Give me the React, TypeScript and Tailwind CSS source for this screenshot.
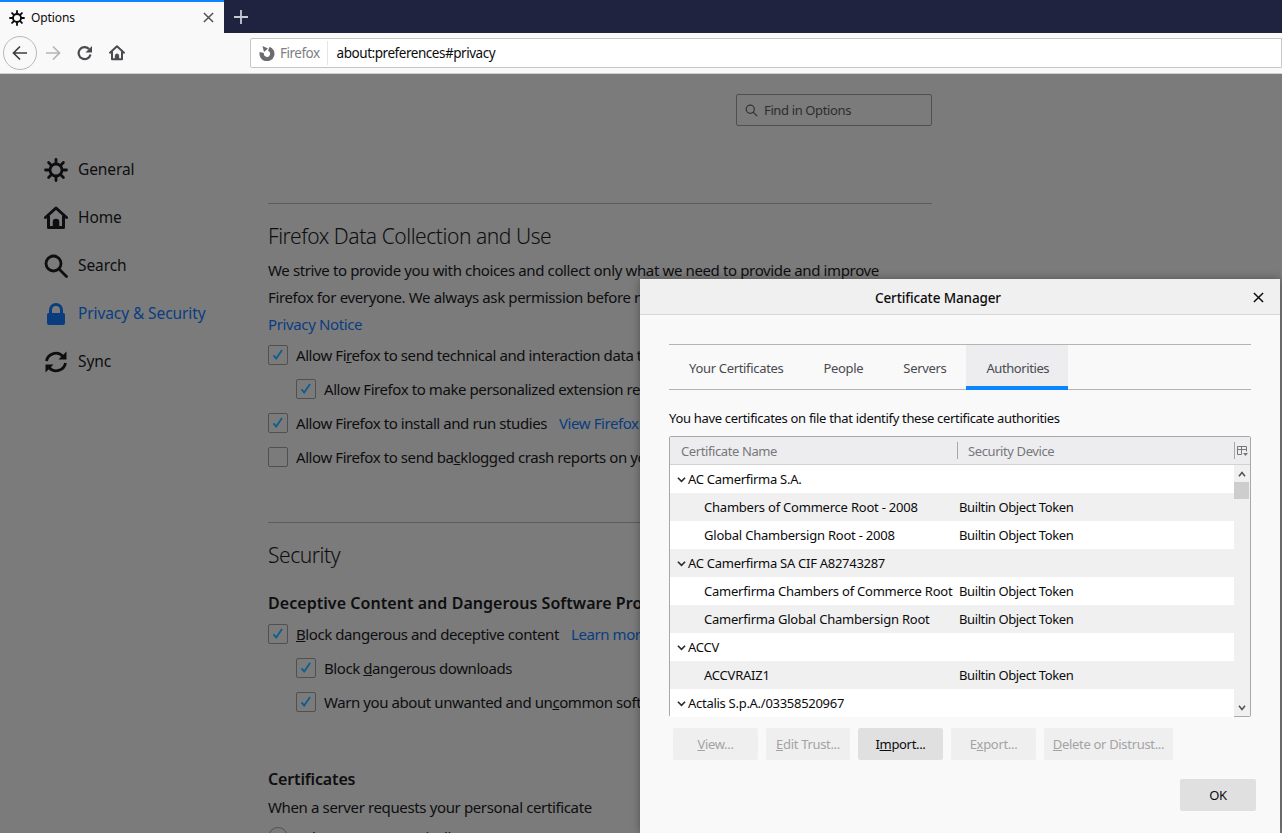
import type { ReactNode } from "react";

const font = "font-['Noto_Sans','Open_Sans',sans-serif]";

function GearIcon({ className }: { className: string }) {
  return (
    <svg viewBox="0 0 24 24" className={className} fill="none" stroke="currentColor">
      <circle cx="12" cy="12" r="6" strokeWidth="2.800" />
      <path strokeWidth="2.800" strokeLinecap="round" d="M12 1.500V5M12 19v3.500M1.500 12H5M19 12h3.500M4.600 4.600l2.400 2.400M17 17l2.400 2.400M19.400 4.600 17 7M7 17l-2.400 2.400" />
    </svg>
  );
}

function HomeIcon({ className }: { className: string }) {
  return (
    <svg viewBox="0 0 24 24" className={className} fill="none" stroke="currentColor" strokeLinejoin="round" strokeLinecap="round">
      <path strokeWidth="3" d="M1.500 11.500 12 2l10.500 9.500" />
      <path strokeWidth="3" d="M4.500 10.500v11h15v-11" />
      <path fill="currentColor" strokeWidth="1.500" d="M9.500 21v-5a2.500 2.500 0 0 1 5 0v5z" />
    </svg>
  );
}

function SearchIcon({ className }: { className: string }) {
  return (
    <svg viewBox="0 0 24 24" className={className} fill="none" stroke="currentColor" strokeWidth="2.800" strokeLinecap="round">
      <circle cx="9.500" cy="9.500" r="7.500" />
      <path d="m15 15 7.500 7.500" />
    </svg>
  );
}

function LockIcon({ className }: { className: string }) {
  return (
    <svg viewBox="0 0 24 24" className={className} fill="currentColor">
      <path d="M12 1a7 7 0 0 0-7 7v3H4.500A1.500 1.500 0 0 0 3 12.500V21a2 2 0 0 0 2 2h14a2 2 0 0 0 2-2v-8.500a1.500 1.500 0 0 0-1.500-1.500H19V8a7 7 0 0 0-7-7zm-4 10V8a4 4 0 0 1 8 0v3z" />
    </svg>
  );
}

function SyncIcon({ className }: { className: string }) {
  return (
    <svg viewBox="0 0 24 24" className={className} fill="none" stroke="currentColor" strokeWidth="2.800">
      <path d="M2.500 11A9.500 9.500 0 0 1 19 6.500" />
      <path d="M21.500 13A9.500 9.500 0 0 1 5 17.500" />
      <path fill="currentColor" stroke="none" d="M22.500 1.500v8h-8zM1.500 22.500v-8h8z" />
    </svg>
  );
}

function Check() {
  return (
    <svg viewBox="0 0 20 20" className="h-5 w-5 text-[#0a5f8f]" fill="none" stroke="currentColor" strokeWidth="2">
      <path d="m5 10.500 3 3.500 6.500-9.500" />
    </svg>
  );
}

function Checkbox({ label, checked = true, indent = false, link }: { label: ReactNode; checked?: boolean; indent?: boolean; link?: string }) {
  return (
    <div className={`flex h-[34px] items-center gap-2 overflow-hidden whitespace-nowrap tracking-[-0.42px] ${indent ? "ml-[28px] w-[344px]" : "w-[372px]"}`}>
      <span className="flex h-5 w-5 shrink-0 items-center justify-center rounded-[2px] border border-[#505050]">
        {checked && <Check />}
      </span>
      <span>{label}</span>
      {link && <span className="ml-[4px] text-[#0a3d80]">{link}</span>}
    </div>
  );
}

const navItems = [
  { label: "General", icon: GearIcon },
  { label: "Home", icon: HomeIcon },
  { label: "Search", icon: SearchIcon },
  { label: "Privacy & Security", icon: LockIcon, active: true },
  { label: "Sync", icon: SyncIcon },
];

const certRows = [
  { name: "AC Camerfirma S.A.", group: true },
  { name: "Chambers of Commerce Root - 2008" },
  { name: "Global Chambersign Root - 2008" },
  { name: "AC Camerfirma SA CIF A82743287", group: true },
  { name: "Camerfirma Chambers of Commerce Root" },
  { name: "Camerfirma Global Chambersign Root" },
  { name: "ACCV", group: true },
  { name: "ACCVRAIZ1" },
  { name: "Actalis S.p.A./03358520967", group: true },
];

function DialogButton({ children, width, enabled = false }: { children: ReactNode; width: string; enabled?: boolean }) {
  return (
    <div className={`flex h-8 items-center justify-center rounded-[2px] pt-[1px] text-[13px] ${width} ${enabled ? "bg-[#e0e0e1] text-[#0c0c0d]" : "bg-[#efeff0] text-[#a3a3a4]"}`}>
      <span>{children}</span>
    </div>
  );
}

function CertificateManager() {
  return (
    <div className="absolute bottom-0 left-[640px] top-[279px] flex w-[640px] flex-col rounded-t-[2px] bg-[#f9f9fa] text-[13px] tracking-[-0.32px] text-[#0c0c0d] shadow-[0_0_8px_rgba(0,0,0,0.35)]">
      <div className="relative flex h-[36px] shrink-0 items-center justify-center border-b border-[#d7d7d8] bg-[#f0f0f1] pr-[44px] pt-[4px]">
        <span className="text-[13.500px] font-medium tracking-[-0.12px]">Certificate Manager</span>
        <svg viewBox="0 0 12 12" className="absolute right-[16px] top-[13px] h-[11px] w-[11px]" stroke="#0c0c0d" strokeWidth="1.600">
          <path d="m1 1 10 10M11 1 1 11" />
        </svg>
      </div>

      <div className="flex flex-col px-[29px] pt-[29px]">
        <div className="flex h-[46px] w-[582px] border-y border-[#b4b4b5] text-[#4a4a4f]">
          <div className="flex items-center px-5 pt-[4px]">Your Certificates</div>
          <div className="flex items-center px-5 pt-[4px]">People</div>
          <div className="flex items-center px-5 pt-[4px]">Servers</div>
          <div className="-mb-px flex items-center border-b-[4px] border-[#0a84ff] bg-[#ededf0] pl-5 pr-[19px] pt-[6px] tracking-[-0.42px]">Authorities</div>
        </div>

        <p className="mt-[19px] h-[27px] leading-[18px]">You have certificates on file that identify these certificate authorities</p>

        <div className="flex h-[281px] w-[582px] flex-col rounded-[2px] border border-[#a8a8a9] bg-white">
          <div className="flex h-[28px] shrink-0 items-center border-b border-[#d2d2d3] bg-[#ededf0] tracking-[-0.4px] text-[#77777a]">
            <div className="flex h-[17px] w-[288px] items-center border-r border-[#a8a8a9] pl-[11px] pt-[2px]">Certificate Name</div>
            <div className="flex h-[17px] flex-1 items-center pl-[10px] pt-[2px]">Security Device</div>
            <div className="flex h-[17px] w-[16px] items-center justify-center border-l border-[#a8a8a9]">
              <svg viewBox="0 0 11 10" className="h-[10px] w-[11px]" fill="none" stroke="#77777a">
                <path d="M.5 8.500v-8h9v5M.5 3.500h9M4.500.5v8M.5 8.500h4" />
                <path d="m6 7 2.500 3L11 7z" fill="#77777a" stroke="none" />
              </svg>
            </div>
          </div>

          <div className="flex min-h-0 flex-1">
            <div className="min-w-0 flex-1">
              {certRows.map((row, i) => (
                <div key={row.name} className={`flex h-[28px] items-center whitespace-nowrap pt-[1px] ${i % 2 === 1 ? "bg-[#f0f0f1]" : "bg-white"}`}>
                  {row.group ? (
                    <div className="flex items-center pl-[7px] tracking-[-0.28px]">
                      <svg viewBox="0 0 10 10" className="mr-[2px] h-[9px] w-[9px]" fill="none" stroke="#2a2a2e" strokeWidth="1.800">
                        <path d="m1 3 4 4 4-4" />
                      </svg>
                      <span>{row.name}</span>
                    </div>
                  ) : (
                    <>
                      <div className="w-[289px] shrink-0 overflow-hidden pl-[34px] tracking-[-0.22px]">{row.name}</div>
                      <div className="tracking-[-0.4px]">Builtin Object Token</div>
                    </>
                  )}
                </div>
              ))}
            </div>
            <div className="flex w-[16px] shrink-0 flex-col bg-[#f0f0f0]">
              <div className="flex h-[17px] items-center justify-center">
                <svg viewBox="0 0 10 8" className="h-[6px] w-[8px]" fill="none" stroke="#505050" strokeWidth="2">
                  <path d="m1 7 4-5 4 5" />
                </svg>
              </div>
              <div className="h-[17px] w-[15px] bg-[#cdcdcd]" />
              <div className="flex-1" />
              <div className="flex h-[17px] items-center justify-center">
                <svg viewBox="0 0 10 8" className="h-[6px] w-[8px]" fill="none" stroke="#505050" strokeWidth="2">
                  <path d="m1 1 4 5 4-5" />
                </svg>
              </div>
            </div>
          </div>
        </div>

        <div className="ml-[4px] mt-[11px] flex gap-2">
          <DialogButton width="w-[85px]"><u>V</u>iew...</DialogButton>
          <DialogButton width="w-[84px]"><u>E</u>dit Trust...</DialogButton>
          <DialogButton width="w-[85px]" enabled>I<u>m</u>port...</DialogButton>
          <DialogButton width="w-[85px]">E<u>x</u>port...</DialogButton>
          <DialogButton width="w-[129px]"><u>D</u>elete or Distrust...</DialogButton>
        </div>

        <div className="mr-[-5px] mt-[19px] flex justify-end">
          <DialogButton width="w-[76px]" enabled>OK</DialogButton>
        </div>
      </div>
    </div>
  );
}

export default function App() {
  return (
    <div className={`relative flex h-[833px] w-full flex-col overflow-hidden bg-[#7b7b7b] ${font} text-[15px] tracking-[-0.37px] text-[#0e0e10]`}>
      {/* tab strip */}
      <div className="flex h-[33px] shrink-0 bg-[#202340]">
        <div className="flex w-[224px] items-center border-t-2 border-[#0a84ff] bg-[#f9f9fa] pl-[9px] pr-[10px]">
          <GearIcon className="h-4 w-4 text-[#0c0c0d]" />
          <span className="ml-[6px] text-[12px] tracking-[-0.1px] text-[#0c0c0d]">Options</span>
          <svg viewBox="0 0 12 12" className="ml-auto h-[11px] w-[11px]" stroke="#505050" strokeWidth="1.600">
            <path d="m1 1 10 10M11 1 1 11" />
          </svg>
        </div>
        <div className="flex w-[33px] items-center justify-center">
          <svg viewBox="0 0 14 14" className="h-[14px] w-[14px]" stroke="#c8c9d2" strokeWidth="1.800">
            <path d="M7 0v14M0 7h14" />
          </svg>
        </div>
      </div>

      {/* nav toolbar */}
      <div className="flex h-[41px] shrink-0 items-center border-b border-[#d2d2d3] bg-[#f9f9fa]">
        <div className="ml-[3px] flex h-[34px] w-[34px] items-center justify-center rounded-full border border-[#b8b8b9]">
          <svg viewBox="0 0 16 16" className="h-4 w-4" fill="none" stroke="#3e3e42" strokeWidth="1.700">
            <path d="M15 8H1.500M8 1.500 1.500 8 8 14.500" />
          </svg>
        </div>
        <svg viewBox="0 0 16 16" className="ml-[8px] h-4 w-4" fill="none" stroke="#b5b5b6" strokeWidth="1.700">
          <path d="M1 8h13.500M8 1.500 14.500 8 8 14.500" />
        </svg>
        <svg viewBox="0 0 16 16" className="ml-[16px] h-4 w-4" fill="none" stroke="#4a4a4f" strokeWidth="2.200">
          <path d="M13.500 9.500A6 6 0 1 1 12 4" />
          <path fill="#4a4a4f" stroke="none" d="M15 1v6.500H8.500z" />
        </svg>
        <HomeIcon className="ml-[16px] h-4 w-4 text-[#4a4a4f]" />
        <div className="ml-[125px] flex h-[30px] flex-1 items-center rounded-l-[2px] border border-[#c6c6c7] bg-white pl-[8px]">
          <svg viewBox="0 0 16 16" className="h-4 w-4 shrink-0" fill="none">
            <path stroke="#6b6b6f" strokeWidth="4.400" d="M9.800 3.800a5.300 5.300 0 1 1-7 3.800" />
            <path fill="#6b6b6f" d="M3.500 1 9 3.500 5 7z" />
          </svg>
          <span className="ml-[5px] text-[13.500px] tracking-[-0.5px] text-[#808084]">Firefox</span>
          <span className="ml-[7px] h-[24px] w-px bg-[#e5e5e6]" />
          <span className="ml-[9px] pt-[1px] text-[13.500px] tracking-[-0.46px] text-[#0c0c0d]">about:preferences#privacy</span>
        </div>
      </div>

      {/* preferences page */}
      <div className="flex min-h-0 flex-1">
        <div className="w-[268px] shrink-0 pl-[44px] pt-[72px] text-[15.500px] tracking-[-0.1px]">
          {navItems.map(({ label, icon: Icon, active }) => (
            <div key={label} className={`flex h-[48px] items-center gap-[10px] ${active ? "text-[#0a3d80]" : ""}`}>
              <Icon className="h-6 w-6 shrink-0" />
              <span>{label}</span>
            </div>
          ))}
        </div>

        <div className="w-[664px] shrink-0 pt-[20px]">
          <div className="flex justify-end">
            <div className="flex h-8 w-[196px] items-center gap-[6px] rounded-[2px] border border-[#4f4f4f] pl-[8px] pt-[1px] text-[13px] text-[#2d2d30]">
              <svg viewBox="0 0 16 16" className="h-[13px] w-[13px]" fill="none" stroke="#333336" strokeWidth="1.500">
                <circle cx="6.500" cy="6.500" r="5" />
                <path d="m10 10 5 5" />
              </svg>
              <span>Find in Options</span>
            </div>
          </div>

          <div className="mt-[77px] border-t border-[#5c5c5c] pt-[16px]">
            <h2 className="text-[21px] font-light leading-[33px] tracking-[-0.45px]">Firefox Data Collection and Use</h2>
            <p className="mt-[4px] leading-[27px]">We strive to provide you with choices and collect only what we need to provide and improve</p>
            <p className="w-[372px] overflow-hidden leading-[27px] whitespace-nowrap">Firefox for everyone. We always ask permission before receiving personal information.</p>
            <p className="leading-[27px] text-[#0a3d80]">Privacy Notice</p>
            <div>
              <Checkbox label={<>Allow Fi<u>r</u>efox to send technical and interaction data to Mozilla</>} />
              <Checkbox indent label="Allow Firefox to make personalized extension recommendations" />
              <Checkbox label="Allow Firefox to install and run studies" link="View Firefox Studies" />
              <Checkbox checked={false} label={<>Allow Firefox to send ba<u>c</u>klogged crash reports on your behalf</>} />
            </div>
          </div>

          <div className="mt-[48px] border-t border-[#5c5c5c] pt-[16px]">
            <h2 className="text-[21px] font-light leading-[33px] tracking-[-0.45px]">Security</h2>
            <h3 className="mt-[19px] w-[372px] overflow-hidden text-[16px] font-semibold leading-[24px] tracking-[0.05px] whitespace-nowrap">Deceptive Content and Dangerous Software Protection</h3>
            <div className="mt-[2px]">
              <Checkbox label={<><u>B</u>lock dangerous and deceptive content</>} link="Learn more" />
              <Checkbox indent label={<>Block <u>d</u>angerous downloads</>} />
              <Checkbox indent label={<>Warn you about unwanted and un<u>c</u>ommon software</>} />
            </div>
            <h3 className="mt-[48px] text-[16px] font-semibold leading-[24px] tracking-[-0.15px]">Certificates</h3>
            <p className="mt-[4px] leading-[24px]">When a server requests your personal certificate</p>
            <div className="mt-[7px] flex items-center gap-2 whitespace-nowrap">
              <span className="h-5 w-5 shrink-0 rounded-full border border-[#505050]" />
              <span>Select one automatically</span>
            </div>
          </div>
        </div>
      </div>

      <CertificateManager />
    </div>
  );
}
